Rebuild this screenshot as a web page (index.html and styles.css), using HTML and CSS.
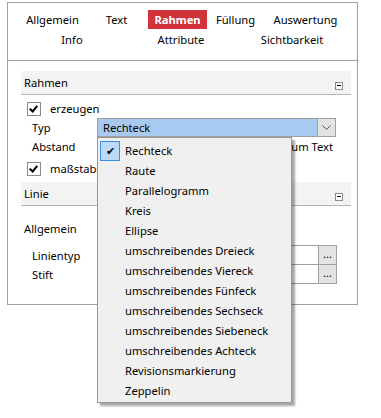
FILE: index.html
```html
<!DOCTYPE html>
<html lang="de">

<head>
    <meta charset="UTF-8">
    <meta name="viewport" content="width=device-width, initial-scale=1.0">
    <title>Eigenschaften</title>
    <link rel="stylesheet" href="styles.css">
</head>

<body>
    <div class="frame">
        <!-- Reiter -->
        <div class="tabs">
            <div class="tab-row">
                <span class="tab w65">Allgemein</span>
                <span class="tab w63">Text</span>
                <span class="tab w59 active">Rahmen</span>
                <span class="tab w57">Füllung</span>
                <span class="tab w83">Auswertung</span>
            </div>
            <div class="tab-row second">
                <span class="tab w104">Info</span>
                <span class="tab w114">Attribute</span>
                <span class="tab w108">Sichtbarkeit</span>
            </div>
        </div>

        <!-- Rahmen -->
        <div class="panel">
            <div class="section-head">
                <span>Rahmen</span>
                <span class="collapse"></span>
            </div>
            <div class="field-row first">
                <span class="check"></span>
                <span>erzeugen</span>
            </div>
            <div class="field-row">
                <span class="label">Typ</span>
                <div class="combo">
                    <span class="combo-text">Rechteck</span>
                    <span class="combo-btn">
                        <svg width="9" height="5" viewBox="0 0 9 5"><path d="M0.5 0.5 L4.5 4.5 L8.5 0.5" fill="none" stroke="#555" stroke-width="1"/></svg>
                    </span>
                </div>
            </div>
            <div class="field-row">
                <span class="label">Abstand</span>
                <span class="suffix">zum Text</span>
            </div>
            <div class="field-row fourth">
                <span class="check"></span>
                <span>maßstabs</span>
            </div>

            <!-- Linie -->
            <div class="section-head linie">
                <span>Linie</span>
                <span class="collapse"></span>
            </div>
            <div class="sub-head">Allgemein</div>
            <div class="field-row input-row top">
                <span class="label">Linientyp</span>
                <div class="text-box"></div>
                <span class="dots">...</span>
            </div>
            <div class="field-row input-row">
                <span class="label">Stift</span>
                <div class="text-box"></div>
                <span class="dots">...</span>
            </div>
        </div>

        <!-- aufgeklappte Liste -->
        <div class="dropdown">
            <div class="item selected"><span class="tick">&#10004;</span>Rechteck</div>
            <div class="item">Raute</div>
            <div class="item">Parallelogramm</div>
            <div class="item">Kreis</div>
            <div class="item">Ellipse</div>
            <div class="item">umschreibendes Dreieck</div>
            <div class="item">umschreibendes Viereck</div>
            <div class="item">umschreibendes Fünfeck</div>
            <div class="item">umschreibendes Sechseck</div>
            <div class="item">umschreibendes Siebeneck</div>
            <div class="item">umschreibendes Achteck</div>
            <div class="item">Revisionsmarkierung</div>
            <div class="item">Zeppelin</div>
        </div>
    </div>
</body>

</html>
```

FILE: styles.css
```css
* {
    padding: 0px;
    margin: 0px;
    box-sizing: border-box;
}

html,
body {
    min-height: 418px;
}

body {
    background-color: white;
    font-family: "Noto Sans", "Open Sans", sans-serif;
    font-size: 11.2px;
    color: black;
}

.frame {
    position: relative;
    margin: 2px 0 0 7px;
    width: 351px;
    height: 303px;
    border: 1px solid #a0a0a0;
}

/* Reiter */
.tabs {
    height: 58px;
    padding: 7px 0 0 12px;
    border-bottom: 1px solid #a0a0a0;
}

.tab-row {
    display: flex;
    height: 19px;
}

.tab-row.second {
    height: 21px;
}

.tab {
    display: flex;
    align-items: center;
    justify-content: center;
    white-space: nowrap;
}

.tab.active {
    background-color: #d0343a;
    color: white;
    font-weight: bold;
}

.w57 { width: 57px; }
.w59 { width: 59px; }
.w63 { width: 63px; }
.w65 { width: 65px; }
.w83 { width: 83px; }
.w104 { width: 104px; }
.w108 { width: 108px; }
.w114 { width: 114px; }

/* Bereich */
.panel {
    padding-top: 10px;
}

.section-head {
    display: flex;
    justify-content: space-between;
    align-items: center;
    height: 24px;
    margin: 0 6px 0 13px;
    padding: 0 8px 0 3px;
    background-color: #f3f3f3;
    border-bottom: 1px solid #b4b4b4;
}

.section-head.linie {
    margin-top: 4px;
}

.collapse {
    position: relative;
    align-self: flex-end;
    margin-bottom: 4px;
    width: 8px;
    height: 8px;
    border: 1px solid #8a8a8a;
    background-color: white;
}

.collapse::after {
    content: "";
    position: absolute;
    left: 1px;
    top: 2px;
    width: 4px;
    height: 1px;
    background-color: black;
}

.field-row {
    display: flex;
    align-items: center;
    height: 19px;
    padding-left: 24px;
}

.field-row.first {
    margin-top: 4px;
}

.field-row.fourth {
    margin-top: 3px;
}

.field-row.first,
.field-row.fourth {
    padding-left: 19px;
}

.check {
    position: relative;
    width: 14px;
    height: 14px;
    margin-right: 9px;
    border: 1px solid #8a8a8a;
    background-color: white;
}

.check::after {
    content: "";
    position: absolute;
    left: 3px;
    top: 1px;
    width: 3px;
    height: 6px;
    border-right: 2px solid black;
    border-bottom: 2px solid black;
    transform: rotate(40deg);
}

.label {
    width: 65px;
}

.combo {
    display: flex;
    width: 239px;
    height: 19px;
    border: 1px solid #a0a0a0;
    background-color: #a8caf0;
}

.combo-text {
    flex: 1;
    padding-left: 5px;
    line-height: 17px;
}

.combo-btn {
    display: flex;
    align-items: center;
    justify-content: center;
    width: 18px;
    border-left: 1px solid #a0a0a0;
    background-color: #e3e3e3;
}

.suffix {
    margin-left: auto;
    margin-right: 24px;
}

.sub-head {
    height: 20px;
    line-height: 20px;
    margin-top: 13px;
    padding-left: 16px;
}

.input-row {
    height: 20px;
}

.input-row.top {
    margin-top: 6px;
}

.input-row + .input-row {
    margin-top: -1px;
}

.text-box {
    width: 221px;
    height: 20px;
    border: 1px solid #a0a0a0;
    border-right: none;
    background-color: white;
}

.dots {
    width: 19px;
    height: 20px;
    border: 1px solid #a0a0a0;
    background-color: #e3e3e3;
    text-align: center;
    line-height: 16px;
    font-size: 11px;
}

/* Liste */
.dropdown {
    position: absolute;
    left: 89px;
    top: 134px;
    width: 195px;
    height: 266px;
    padding-top: 3px;
    background-color: #f0f0f0;
    border: 1px solid #979797;
    box-shadow: 3px 3px 2px rgba(0, 0, 0, 0.35);
}

.item {
    position: relative;
    height: 20px;
    line-height: 20px;
    padding-left: 27px;
    white-space: nowrap;
}

.tick {
    position: absolute;
    left: 2px;
    top: 0;
    width: 20px;
    height: 20px;
    border: 1px solid #3d8ee0;
    background-color: #bcdaf7;
    text-align: center;
    line-height: 18px;
    font-size: 11px;
}
```
